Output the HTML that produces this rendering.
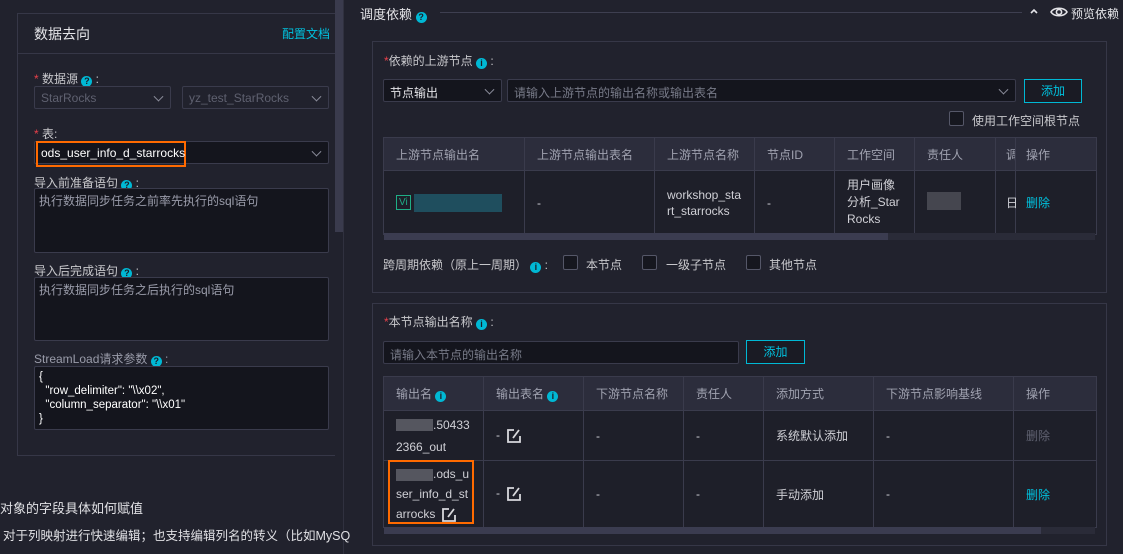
<!DOCTYPE html>
<html><head><meta charset="utf-8"><style>
*{box-sizing:border-box;margin:0;padding:0}
body{width:1123px;height:554px;overflow:hidden;background:#21222d;font-family:"Liberation Sans","Noto Sans CJK SC",sans-serif;font-size:12px;color:#d0d0d6;position:relative}
.a{position:absolute}
.bd{border:1px solid #363747}
.inp{background:#14151d;border:1px solid #3a3b4c;border-radius:2px}
.ph{color:#777a88}
.lbl{color:#c8c8cc}
.q{display:inline-block;width:11px;height:11px;border-radius:50%;background:#00b8d4;color:#1a1b24;font-size:9px;text-align:center;line-height:11px;font-weight:bold;vertical-align:-1px}
.chev{position:absolute;right:8px;top:50%;width:7px;height:7px;border-right:1.5px solid #8a8c9a;border-bottom:1.5px solid #8a8c9a;transform:translateY(-70%) rotate(45deg)}
.red{color:#e8404a}
.btn{border:1px solid #00b8d4;color:#00c1de;text-align:center;background:#1a1b24}
.cb{width:15px;height:15px;border:1px solid #555768;border-radius:2px;background:#16171f}
table{border-collapse:collapse;position:absolute;table-layout:fixed}
td,th{border:1px solid #3a3b4c;font-weight:normal;text-align:left;padding:0 12px;vertical-align:middle;font-size:12px}
th{background:#2c2d3c;color:#a0a2b0}
.cy{color:#00c1de}
.ed{vertical-align:middle;margin-left:6px}
</style></head><body>
<svg width="0" height="0" style="position:absolute"><symbol id="ed" viewBox="0 0 16 16"><path d="M8 2H2V14H14V8" fill="none" stroke="#d8d8dc" stroke-width="1.8"/><path d="M7 10L13 2" stroke="#d8d8dc" stroke-width="1.8"/></symbol></svg>
<!-- left panel -->
<div class="a" style="left:335px;top:0;width:8px;height:232px;background:#3a3b4d"></div>
<div class="a" style="left:343px;top:0;width:1px;height:554px;background:#30313f"></div>
<div class="a bd" style="left:17px;top:13px;width:318px;height:443px;border-right:none"></div>
<div class="a" style="left:17px;top:53px;width:318px;height:1px;background:#363747"></div>
<div class="a" style="left:34px;top:24px;font-size:14px;color:#e4e4e8">数据去向</div>
<div class="a cy" style="left:282px;top:25px">配置文档</div>
<div class="a lbl" style="left:34px;top:70px"><span class="red">*</span> 数据源 <span class="q">?</span> :</div>
<div class="a inp" style="left:34px;top:86px;width:137px;height:23px;background:#21222d"><span class="ph" style="position:absolute;left:6px;top:4px;color:#5f6170">StarRocks</span><i class="chev"></i></div>
<div class="a inp" style="left:182px;top:86px;width:147px;height:23px;background:#21222d"><span class="ph" style="position:absolute;left:6px;top:4px;color:#5f6170">yz_test_StarRocks</span><i class="chev"></i></div>
<div class="a lbl" style="left:34px;top:125px"><span class="red">*</span> 表:</div>
<div class="a inp" style="left:34px;top:141px;width:295px;height:23px"><i class="chev"></i></div>
<div class="a" style="left:36px;top:141px;width:150px;height:26px;border:2px solid #ff6a00"></div>
<div class="a" style="left:41px;top:146px;color:#fff;font-size:12px">ods_user_info_d_starrocks</div>
<div class="a lbl" style="left:34px;top:174px">导入前准备语句 <span class="q">?</span> :</div>
<div class="a inp" style="left:34px;top:188px;width:295px;height:65px"><span class="ph" style="position:absolute;left:4px;top:3px;color:#9a9caa">执行数据同步任务之前率先执行的sql语句</span></div>
<div class="a lbl" style="left:34px;top:262px">导入后完成语句 <span class="q">?</span> :</div>
<div class="a inp" style="left:34px;top:277px;width:295px;height:64px"><span class="ph" style="position:absolute;left:4px;top:3px;color:#9a9caa">执行数据同步任务之后执行的sql语句</span></div>
<div class="a lbl" style="left:34px;top:350px;color:#9a9caa">StreamLoad请求参数 <span class="q">?</span> :</div>
<div class="a inp" style="left:34px;top:366px;width:295px;height:64px;color:#fff;font-size:11.5px;line-height:14px;padding:3px 4px;white-space:pre">{
  "row_delimiter": "\\x02",
  "column_separator": "\\x01"
}</div>
<div class="a" style="left:0;top:498px;font-size:13px;color:#e0e0e4">对象的字段具体如何赋值</div>
<div class="a" style="left:3px;top:525px;font-size:12.5px;color:#e0e0e4">对于列映射进行快速编辑；也支持编辑列名的转义（比如MySQ</div>

<!-- right header -->
<div class="a" style="left:360px;top:4px;font-size:13px;color:#e4e4e8">调度依赖 <span class="q">?</span></div>
<div class="a" style="left:440px;top:12px;width:582px;height:1px;background:#3e3f50"></div>
<svg class="a" style="left:1030px;top:8px" width="8" height="6" viewBox="0 0 8 6"><path d="M1 5L4 2L7 5" fill="none" stroke="#e4e4e8" stroke-width="1.6"/></svg>
<svg class="a" style="left:1050px;top:5px" width="18" height="14" viewBox="0 0 18 14"><path d="M1 7C4 2 14 2 17 7C14 12 4 12 1 7Z" fill="none" stroke="#e4e4e8" stroke-width="1.6"/><circle cx="9" cy="7" r="2.6" fill="none" stroke="#e4e4e8" stroke-width="1.6"/></svg>
<div class="a" style="left:1071px;top:5px;color:#e4e4e8">预览依赖</div>

<!-- box1 -->
<div class="a bd" style="left:372px;top:41px;width:735px;height:252px"></div>
<div class="a lbl" style="left:384px;top:52px"><span class="red">*</span>依赖的上游节点 <span class="q">i</span> :</div>
<div class="a inp" style="left:383px;top:79px;width:119px;height:23px"><span style="position:absolute;left:6px;top:4px;color:#e4e4e8">节点输出</span><i class="chev"></i></div>
<div class="a inp" style="left:507px;top:79px;width:509px;height:23px"><span class="ph" style="position:absolute;left:6px;top:4px">请输入上游节点的输出名称或输出表名</span><i class="chev"></i></div>
<div class="a btn" style="left:1024px;top:79px;width:58px;height:24px;line-height:22px">添加</div>
<div class="a cb" style="left:949px;top:111px"></div>
<div class="a lbl" style="left:972px;top:112px">使用工作空间根节点</div>
<table style="left:383px;top:137px;width:713px">
<colgroup><col style="width:141px"><col style="width:130px"><col style="width:100px"><col style="width:80px"><col style="width:80px"><col style="width:81px"><col style="width:20px"><col style="width:81px"></colgroup>
<tr style="height:33px"><th>上游节点输出名</th><th>上游节点输出表名</th><th>上游节点名称</th><th>节点ID</th><th>工作空间</th><th>责任人</th><th style="padding:0 0 0 10px;overflow:hidden">调</th><th style="padding-left:10px">操作</th></tr>
<tr style="height:64px;background:#1e1f29"><td><span style="display:inline-block;border:1px solid #1fae86;color:#1fae86;font-size:10px;padding:1px 2px;vertical-align:middle">Vi</span> <span style="display:inline-block;width:88px;height:18px;background:#1f4e5e;vertical-align:middle"></span></td><td>-</td><td style="line-height:16px">workshop_sta rt_starrocks</td><td>-</td><td style="line-height:17px;word-break:break-all">用户画像分析_StarRocks</td><td><span style="display:inline-block;width:34px;height:18px;background:#45464f"></span></td><td style="padding:0 0 0 10px;border-right:none">日</td><td class="cy" style="padding-left:10px">删除</td></tr>
</table>
<div class="a" style="left:384px;top:233px;width:711px;height:7px;background:#2a2b38"></div>
<div class="a" style="left:384px;top:233px;width:504px;height:7px;background:#3b3c50"></div>
<div class="a lbl" style="left:383px;top:256px">跨周期依赖（原上一周期） <span class="q">i</span> :</div>
<div class="a cb" style="left:563px;top:255px"></div><div class="a lbl" style="left:586px;top:256px">本节点</div>
<div class="a cb" style="left:642px;top:255px"></div><div class="a lbl" style="left:666px;top:256px">一级子节点</div>
<div class="a cb" style="left:746px;top:255px"></div><div class="a lbl" style="left:769px;top:256px">其他节点</div>

<!-- box2 -->
<div class="a bd" style="left:372px;top:303px;width:735px;height:243px"></div>
<div class="a lbl" style="left:384px;top:313px"><span class="red">*</span>本节点输出名称 <span class="q">i</span> :</div>
<div class="a inp" style="left:383px;top:341px;width:356px;height:23px"><span class="ph" style="position:absolute;left:6px;top:4px">请输入本节点的输出名称</span></div>
<div class="a btn" style="left:746px;top:340px;width:59px;height:24px;line-height:22px">添加</div>
<table style="left:383px;top:376px;width:713px">
<colgroup><col style="width:100px"><col style="width:100px"><col style="width:100px"><col style="width:80px"><col style="width:110px"><col style="width:140px"><col style="width:83px"></colgroup>
<tr style="height:34px"><th>输出名 <span class="q">i</span></th><th>输出表名 <span class="q">i</span></th><th>下游节点名称</th><th>责任人</th><th>添加方式</th><th>下游节点影响基线</th><th>操作</th></tr>
<tr style="height:50px;background:#1e1f29"><td style="line-height:22px"><span style="display:inline-block;width:37px;height:12px;background:#55565f;vertical-align:middle"></span>.50433 2366_out</td><td>-<svg class="ed" width="16" height="16"><use href="#ed"/></svg></td><td>-</td><td>-</td><td>系统默认添加</td><td>-</td><td style="color:#5f6170">删除</td></tr>
<tr style="height:67px;background:#1e1f29"><td style="line-height:20px"><span style="display:inline-block;width:37px;height:12px;background:#55565f;vertical-align:middle"></span>.ods_u ser_info_d_st arrocks<svg class="ed" width="16" height="16"><use href="#ed"/></svg></td><td>-<svg class="ed" width="16" height="16"><use href="#ed"/></svg></td><td>-</td><td>-</td><td>手动添加</td><td>-</td><td class="cy">删除</td></tr>
</table>
<div class="a" style="left:388px;top:460px;width:86px;height:64px;border:2px solid #ff6a00"></div>
<div class="a" style="left:384px;top:527px;width:711px;height:7px;background:#2a2b38"></div>
<div class="a" style="left:384px;top:527px;width:657px;height:7px;background:#3b3c50"></div>
</body></html>
